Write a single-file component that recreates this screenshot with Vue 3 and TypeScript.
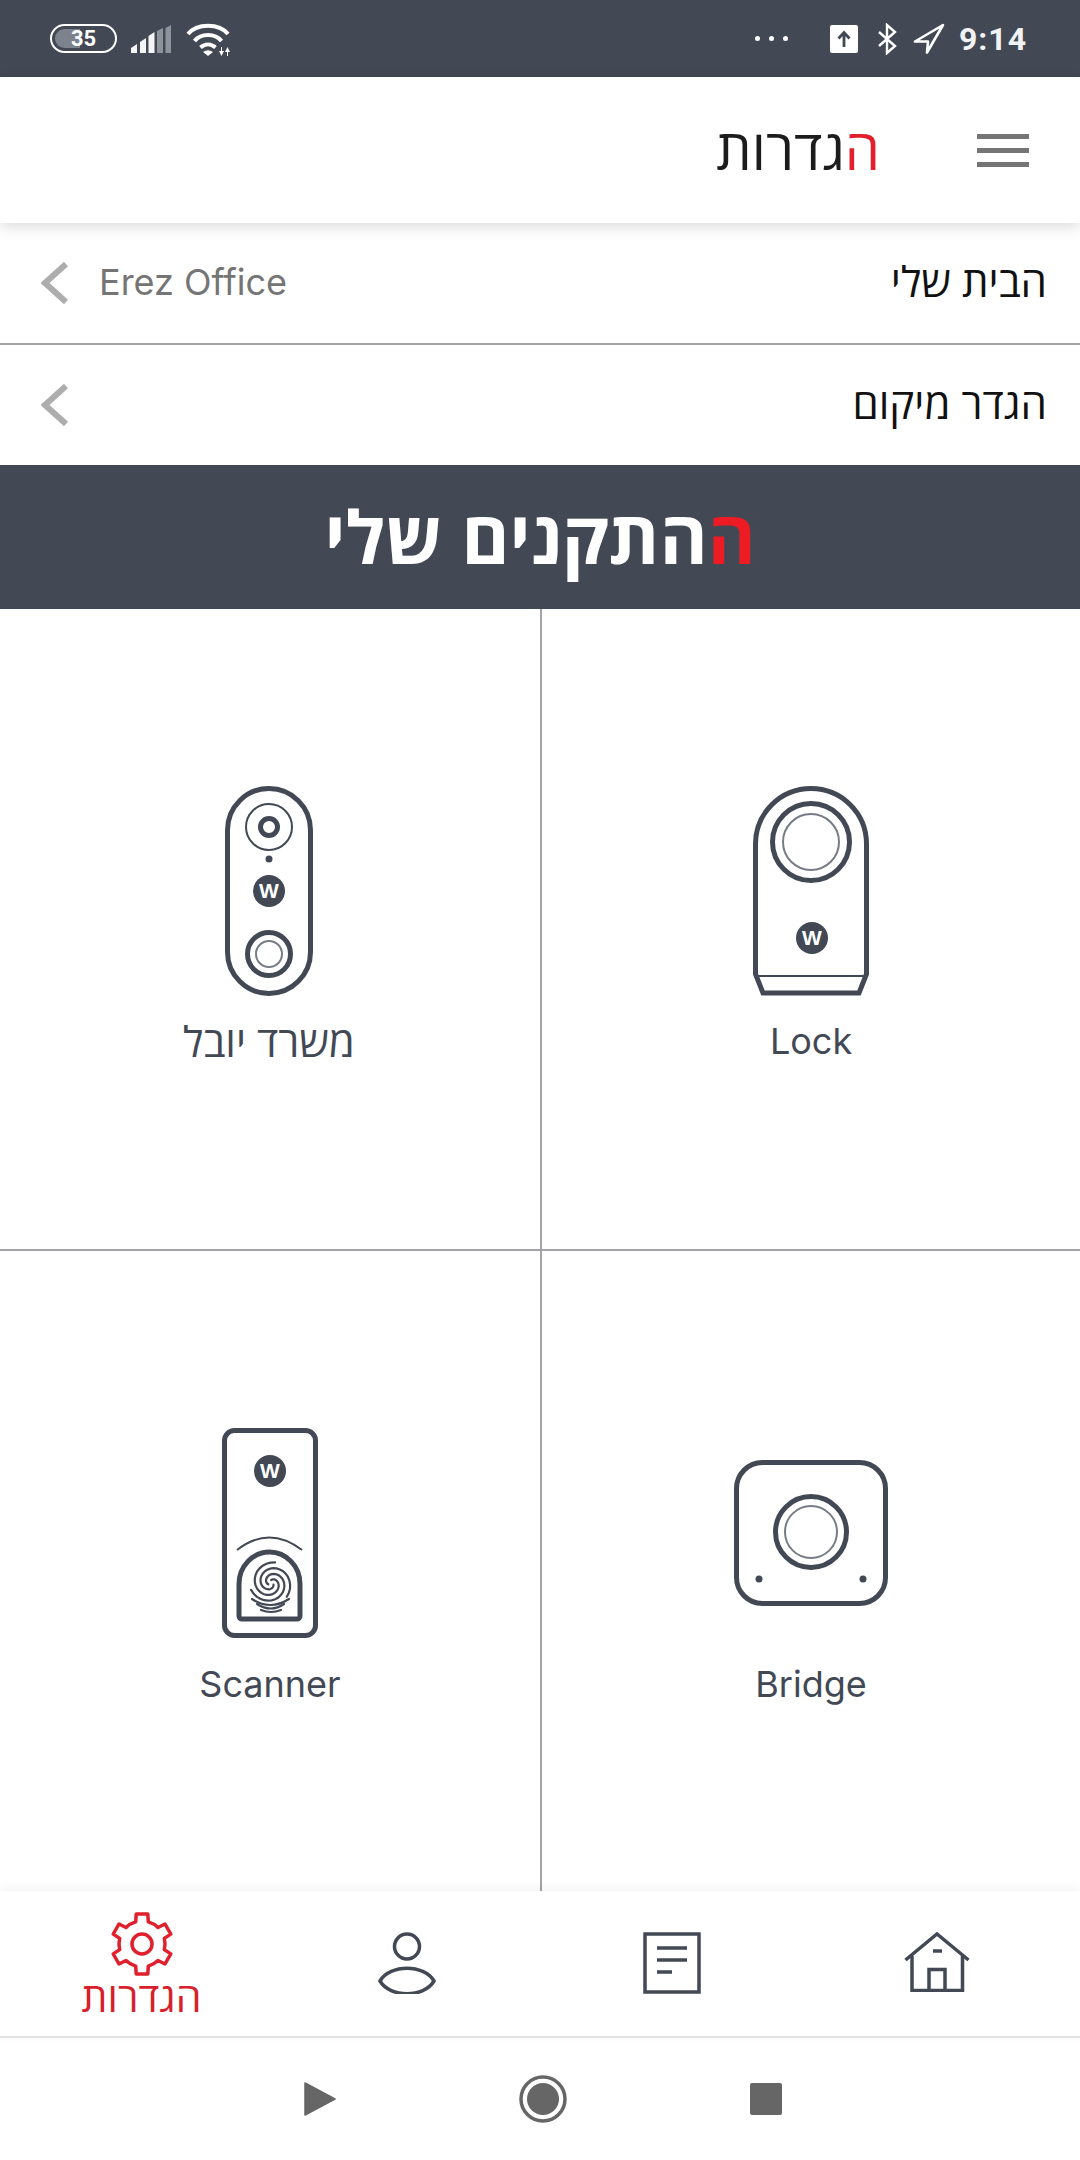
<template>
  <div class="screen" dir="rtl">
    <!-- status bar -->
    <div class="status" dir="ltr">
      <div class="status-side">
        <div class="battery"><span class="battery-fill"></span><span class="battery-num">35</span></div>
        <svg width="41" height="28" viewBox="0 0 41 28" class="signal">
          <path d="M0 28 V23 L6 19 V28 Z" fill="#f4f5f7" />
          <path d="M9 28 V17 L15 13 V28 Z" fill="#f4f5f7" />
          <path d="M17.500 28 V11 L23.500 7 V28 Z" fill="#f4f5f7" />
          <path d="M26 28 V6 L32 3 V28 Z" fill="#8d929b" />
          <path d="M34.500 28 V3 L40 0 V28 Z" fill="#8d929b" />
        </svg>
        <svg width="46" height="34" viewBox="0 0 46 34" class="wifi">
          <path d="M2 11 C11 0 33 0 42 11" fill="none" stroke="#fff" stroke-width="4" />
          <path d="M8.500 18 C15 10 29 10 35.500 18" fill="none" stroke="#fff" stroke-width="4" />
          <path d="M14.500 24.500 C19 20.500 25 20.500 29.500 24.500" fill="none" stroke="#fff" stroke-width="4" />
          <path d="M22 33 L17 29 Q22 25.500 27 29 Z" fill="#fff" />
          <path d="M36 24 V28 H38 L35.500 33 L33 28 H35 V24 Z" fill="#fff" />
          <path d="M41 33 V29 H39 L41.500 24 L44 29 H42 V33 Z" fill="#fff" />
        </svg>
      </div>
      <div class="status-side status-right">
        <div class="dots"><i></i><i></i><i></i></div>
        <svg width="28" height="28" viewBox="0 0 28 28" class="upload">
          <rect width="28" height="28" rx="2" fill="#fff" />
          <path d="M14 22 V8 M8.500 13.500 L14 7.500 L19.500 13.500" fill="none" stroke="#424955" stroke-width="2.800" />
        </svg>
        <svg width="21" height="32" viewBox="0 0 21 32" class="bt">
          <path d="M2 9 L18 23 L10 30 V2 L18 9 L2 23" fill="none" stroke="#fff" stroke-width="2.400" />
        </svg>
        <svg width="33" height="32" viewBox="0 0 33 32" class="arrow">
          <path d="M30 2 L2 18.500 L15 18.500 L14 29.500 Z" fill="none" stroke="#fff" stroke-width="2.600" stroke-linejoin="round" />
        </svg>
        <span class="time">9:14</span>
      </div>
    </div>

    <!-- header -->
    <header class="topbar">
      <div class="burger"><i></i><i></i><i></i></div>
      <h1 class="page-title"><span class="red">ה</span>גדרות</h1>
    </header>

    <!-- settings rows -->
    <div class="row row-first">
      <span class="row-label">הבית שלי</span>
      <div class="row-end">
        <span class="row-value" dir="ltr">Erez Office</span>
        <svg class="chev" width="28" height="42" viewBox="0 0 28 42"><path d="M25 2 L4 21 L25 40" /></svg>
      </div>
    </div>
    <div class="row">
      <span class="row-label">הגדר מיקום</span>
      <div class="row-end">
        <svg class="chev" width="28" height="42" viewBox="0 0 28 42"><path d="M25 2 L4 21 L25 40" /></svg>
      </div>
    </div>

    <div class="banner"><span class="red-bright">ה</span>התקנים שלי</div>

    <!-- device grid -->
    <div class="devices">
      <div class="cell">
        <div class="device-pic">
          <svg width="116" height="210" viewBox="0 0 116 210" class="dev">
            <path d="M2.500 188 V58 A55.500 55.500 0 0 1 113.500 58 V188 L106 207 H10 Z" />
            <path class="thin" d="M3 190 H113" />
            <circle cx="58" cy="56" r="38.500" />
            <circle class="thin-gray" cx="58" cy="56" r="28" />
            <circle class="badge" cx="59" cy="152" r="16" />
            <text class="w" x="59" y="159">W</text>
          </svg>
        </div>
        <span class="device-name">Lock</span>
      </div>
      <div class="cell cell-bell">
        <div class="device-pic">
          <svg width="88" height="210" viewBox="0 0 88 210" class="dev">
            <rect x="2.500" y="2.500" width="83" height="205" rx="41.500" />
            <circle class="thin" cx="44" cy="41" r="23" />
            <circle cx="44" cy="41" r="8.500" stroke-width="6" />
            <circle class="badge" cx="44" cy="73" r="3.500" />
            <circle class="badge" cx="44" cy="105" r="16" />
            <text class="w" x="44" y="112">W</text>
            <circle cx="44" cy="168" r="21.500" />
            <circle class="thin-gray" cx="44" cy="168" r="13" />
          </svg>
        </div>
        <span class="device-name device-name-he">משרד יובל</span>
      </div>
      <div class="cell">
        <div class="device-pic">
          <svg width="154" height="146" viewBox="0 0 154 146" class="dev">
            <rect x="2.500" y="2.500" width="149" height="141" rx="26" />
            <circle cx="77" cy="72" r="35.500" />
            <circle class="thin-gray" cx="77" cy="72" r="26" />
            <circle class="badge" cx="25" cy="119" r="3.500" />
            <circle class="badge" cx="129" cy="119" r="3.500" />
          </svg>
        </div>
        <span class="device-name">Bridge</span>
      </div>
      <div class="cell">
        <div class="device-pic">
          <svg width="96" height="210" viewBox="0 0 96 210" class="dev">
            <rect x="2.500" y="2.500" width="91" height="205" rx="10" />
            <circle class="badge" cx="48" cy="43" r="16" />
            <text class="w" x="48" y="50">W</text>
            <path class="thin" d="M15 122 Q47 97 80 122" />
            <path d="M20 191 H75 A3 3 0 0 0 78 188 V156 A30.500 32 0 0 0 17 156 V188 A3 3 0 0 0 20 191 Z" />
            <g class="print">
              <path v-for="arm in swirlArms" :key="arm" :d="arm" />
              <path d="M30 171 Q48 183 67 171" />
              <path d="M35 176 Q49 185 62 176" />
              <path d="M39 182 Q49 186 59 182" />
            </g>
          </svg>
        </div>
        <span class="device-name">Scanner</span>
      </div>
    </div>

    <!-- bottom tabs -->
    <nav class="tabs">
      <div class="tab">
        <svg width="66" height="60" viewBox="0 0 66 60" class="tab-ico">
          <path d="M1.500 28 L33 2 L64.500 28" />
          <path d="M8 24 V58.500 H58.500 V24" />
          <path d="M25 58 V37.500 H41 V58" />
          <path d="M29 19 H38" />
        </svg>
      </div>
      <div class="tab">
        <svg width="58" height="62" viewBox="0 0 58 62" class="tab-ico">
          <rect x="2" y="2" width="54" height="58" />
          <path d="M14 16 H44 M14 28 H44 M14 40 H29" />
        </svg>
      </div>
      <div class="tab">
        <svg width="58" height="62" viewBox="0 0 58 62" class="tab-ico">
          <circle cx="29" cy="14.500" r="12.500" />
          <path d="M2 49 C12 32 46 32 56 49 C46 66 12 66 2 49 Z" />
        </svg>
      </div>
      <div class="tab tab-active">
        <svg width="66" height="66" viewBox="0 0 66 66" class="gear">
          <path :d="gearPath" />
          <circle cx="33" cy="33" r="10" />
        </svg>
        <span class="tab-label">הגדרות</span>
      </div>
    </nav>

    <!-- android buttons -->
    <div class="softkeys" dir="ltr">
      <svg width="32" height="34" viewBox="0 0 32 34"><path d="M1 1 L31 17 L1 33 Z" fill="#666" stroke="#666" stroke-width="1.500" stroke-linejoin="round" /></svg>
      <svg width="48" height="48" viewBox="0 0 48 48">
        <circle cx="24" cy="24" r="22" fill="none" stroke="#666" stroke-width="3.500" />
        <circle cx="24" cy="24" r="16" fill="#666" />
      </svg>
      <span class="stop-key"></span>
    </div>
  </div>
</template>

<script setup lang="ts">
// outline of the settings cog: 6 teeth, first one pointing up
function buildGear(cx: number, cy: number, outer: number, root: number): string {
  const pt = (r: number, deg: number) => {
    const a = (deg * Math.PI) / 180
    return `${(cx + r * Math.cos(a)).toFixed(1)} ${(cy + r * Math.sin(a)).toFixed(1)}`
  }
  let d = ''
  for (let i = 0; i < 6; i++) {
    const a = -90 + i * 60
    d += `${i === 0 ? 'M' : 'A' + root + ' ' + root + ' 0 0 1 '}${pt(root, a - 16)} `
    d += `L${pt(outer, a - 11)} L${pt(outer, a + 11)} L${pt(root, a + 16)} `
  }
  d += `A${root} ${root} 0 0 1 ${pt(root, -106)} Z`
  return d
}

// fingerprint on the scanner: three spiral arms round one centre
function buildArm(cx: number, cy: number, start: number): string {
  const points: string[] = []
  for (let i = 0; i <= 30; i++) {
    const t = i / 30
    const r = 3 + 18 * t
    const a = start + 6.4 * t
    points.push(`${(cx + r * Math.cos(a)).toFixed(1)} ${(cy + r * Math.sin(a)).toFixed(1)}`)
  }
  return 'M' + points.join(' L')
}

const gearPath = buildGear(33, 33, 30.5, 23)
const swirlArms = [0, 1, 2].map((i) => buildArm(49, 155, 0.6 + (i * 2 * Math.PI) / 3))
</script>

<style>
body {
  margin: 0;
  background: #fff;
}
</style>

<style scoped>
.screen {
  width: 1080px;
  height: 2160px;
  display: flex;
  flex-direction: column;
  background: #fff;
  font-family: "Open Sans", "Liberation Sans", "DejaVu Sans", sans-serif;
  overflow: hidden;
}

.status {
  height: 77px;
  flex: none;
  background: #424955;
  display: flex;
  justify-content: space-between;
  align-items: center;
  padding: 0 53px 0 50px;
  box-sizing: border-box;
}
.status-side {
  display: flex;
  align-items: center;
}
.battery {
  width: 67px;
  height: 29px;
  border: 2px solid #fff;
  border-radius: 15px;
  box-sizing: border-box;
  display: flex;
  align-items: center;
  justify-content: center;
  overflow: hidden;
  position: relative;
}
.battery-fill {
  position: absolute;
  left: 3px;
  top: 3px;
  bottom: 3px;
  width: 25px;
  border-radius: 10px 0 0 10px;
  background: #7d838d;
}
.battery-num {
  position: relative;
  color: #fff;
  font: 700 22px "Roboto", sans-serif;
}
.signal {
  margin-left: 14px;
}
.wifi {
  margin-left: 14px;
  margin-top: 3px;
}
.dots {
  display: flex;
  gap: 9px;
  margin-right: 42px;
}
.dots i {
  width: 5px;
  height: 5px;
  border-radius: 50%;
  background: #fff;
}
.bt {
  margin-left: 19px;
}
.arrow {
  margin-left: 15px;
}
.time {
  margin-left: 13px;
  color: #f2f3f5;
  font: 700 32px "Roboto", sans-serif;
  letter-spacing: 1px;
}

.topbar {
  height: 146px;
  flex: none;
  background: #fff;
  display: flex;
  align-items: center;
  padding: 0 51px 0 0;
  box-shadow: 0 4px 14px rgba(0, 0, 0, 0.14);
  position: relative;
  z-index: 1;
}
.burger {
  width: 52px;
  display: flex;
  flex-direction: column;
  gap: 9px;
}
.burger i {
  height: 5px;
  background: #757575;
}
.page-title {
  margin: 0 97px 5px 0;
  font-size: 56px;
  font-weight: 400;
  color: #1c1c1c;
}
.red {
  color: #e0202c;
}
.red-bright {
  color: #ed1c24;
}

.row {
  height: 120px;
  flex: none;
  display: flex;
  align-items: center;
  justify-content: space-between;
  padding: 0 33px 0 41px;
}
.row-first {
  height: 122px;
  border-bottom: 2px solid #a3a3a8;
  box-sizing: border-box;
}
.row-label {
  font-size: 42px;
  color: #111;
  margin-bottom: 5px;
}
.row-end {
  display: flex;
  align-items: center;
  gap: 30px;
}
.row-value {
  font: 400 36px "Inter", sans-serif;
  color: #757575;
  margin-bottom: 2px;
}
.chev path {
  fill: none;
  stroke: #adadad;
  stroke-width: 6;
}

.banner {
  height: 144px;
  padding-bottom: 4px;
  box-sizing: border-box;
  flex: none;
  background: #424955;
  color: #fff;
  font-size: 73px;
  font-weight: 700;
  display: flex;
  align-items: center;
  justify-content: center;
}

.devices {
  height: 1282px;
  flex: none;
  display: grid;
  grid-template-columns: 1fr 1fr;
  grid-template-rows: 642px 1fr;
}
.cell {
  display: flex;
  flex-direction: column;
  align-items: center;
  padding-top: 177px;
  box-sizing: border-box;
}
.cell:nth-child(1),
.cell:nth-child(3) {
  border-left: 2px solid #a3a3a8;
}
.cell:nth-child(1),
.cell:nth-child(2) {
  border-bottom: 2px solid #a3a3a8;
}
.cell-bell {
  padding-right: 2px;
}
.device-pic {
  height: 210px;
  display: flex;
  align-items: center;
  justify-content: center;
}
.device-name {
  margin-top: 23px;
  font: 400 36px "Inter", sans-serif;
  color: #424955;
}
.cell:nth-child(n + 3) .device-name {
  margin-top: 24px;
}
.device-name-he {
  font: 400 42px/44px "Open Sans", "Liberation Sans", sans-serif;
}
.dev circle,
.dev rect,
.dev path {
  fill: none;
  stroke: #424955;
  stroke-width: 5;
}
.dev .thin {
  stroke-width: 2;
}
.dev .print path {
  stroke-width: 2.2;
  stroke-linecap: round;
}
.dev .thin-gray {
  stroke: #777c85;
  stroke-width: 2;
}
.dev .badge {
  fill: #424955;
  stroke: none;
}
.w {
  fill: #fff;
  font: 700 21px "Liberation Sans", sans-serif;
  text-anchor: middle;
}

.tabs {
  height: 147px;
  flex: none;
  display: grid;
  grid-template-columns: repeat(4, 265px);
  justify-content: center;
  background: #fff;
  border-bottom: 2px solid #e3e3e3;
  box-sizing: border-box;
  box-shadow: 0 -3px 10px rgba(0, 0, 0, 0.05);
  position: relative;
  padding-right: 2px;
}
.tab {
  display: flex;
  flex-direction: column;
  align-items: center;
  padding-top: 41px;
}
.tab-ico * {
  fill: none;
  stroke: #424955;
  stroke-width: 3.5;
}
.tab-active {
  padding-top: 20px;
}
.gear * {
  fill: none;
  stroke: #e0202c;
  stroke-width: 3.5;
  stroke-linejoin: round;
}
.tab-label {
  font-size: 41px;
  line-height: 36px;
  margin-top: 1px;
  color: #d71f2d;
}

.softkeys {
  height: 122px;
  flex: none;
  display: flex;
  align-items: center;
  justify-content: center;
  gap: 183px;
  padding-left: 5px;
}
.stop-key {
  width: 32px;
  height: 32px;
  border-radius: 2px;
  background: #666;
}
</style>
